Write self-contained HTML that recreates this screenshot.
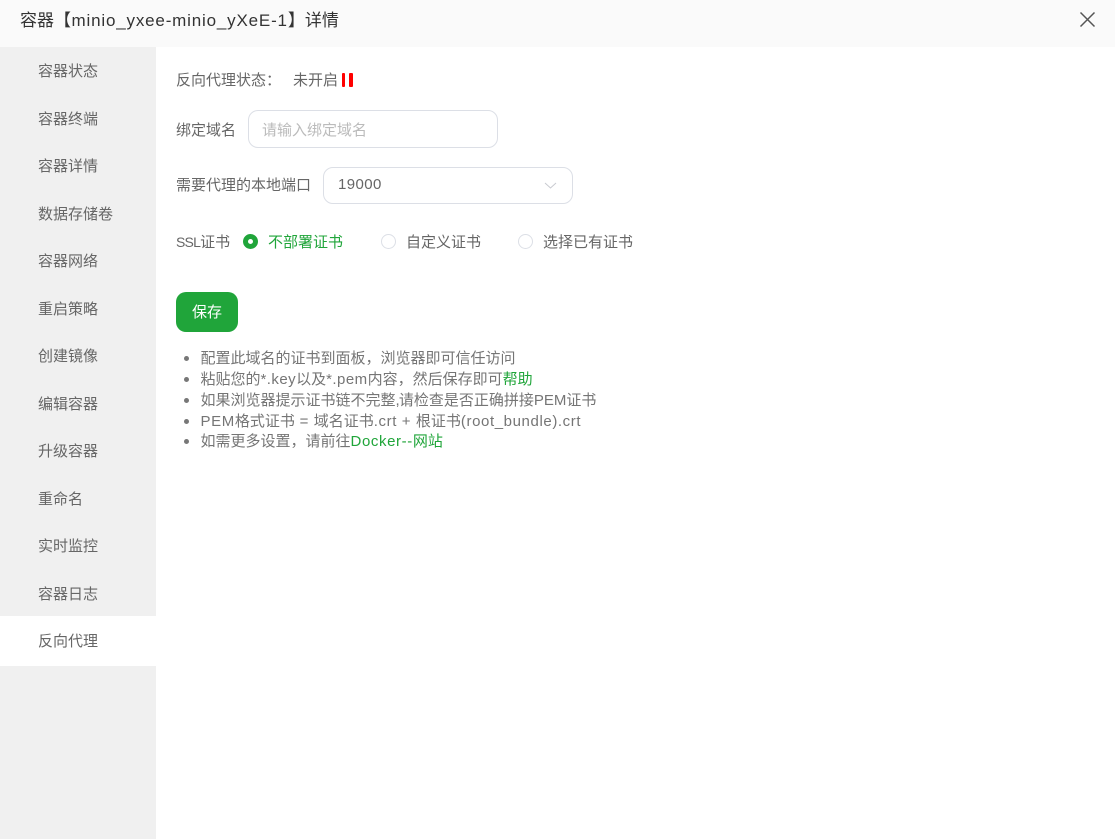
<!DOCTYPE html>
<html lang="zh-CN">
<head>
<meta charset="utf-8">
<title>容器详情</title>
<style>
*{box-sizing:border-box;margin:0;padding:0}
html,body{width:1115px;height:839px;overflow:hidden;background:#fff}
body{position:relative;font-family:"Liberation Sans","Noto Sans CJK SC",sans-serif;font-size:15px;color:#666}
.t{position:absolute;white-space:nowrap;line-height:20px}
.head{position:absolute;left:0;top:0;width:1115px;height:47px;background:#fafafa}
.title{position:absolute;left:20px;top:9px;font-size:17px;line-height:24px;color:#333;white-space:nowrap}
.side{position:absolute;left:0;top:47px;width:156px;height:792px;background:#f0f0f0}
.side div{position:absolute;left:38px;white-space:nowrap;line-height:20px;color:#666}
.active{position:absolute;left:0;top:616px;width:156px;height:50px;background:#fff}
.box{position:absolute;background:#fff;border:1px solid #dcdfe6;border-radius:10px}
.radio{position:absolute;width:15px;height:15px;border-radius:50%;border:1px solid #dcdfe6;background:#fff}
.radio.on{border:5px solid #20a53a}
.btn{position:absolute;left:176px;top:292px;width:62px;height:40px;background:#20a53a;border-radius:10px;color:#fff;text-align:center;line-height:40px;font-size:15px;padding-top:1px}
.dot{position:absolute;left:184px;width:5px;height:5px;border-radius:50%;background:#777}
.g{color:#20a53a}
.l{color:#757575}
.l .g{color:#20a53a}
.w{letter-spacing:.6px}
</style>
</head>
<body>
<div class="head"></div>
<div class="title">容器【<span style="letter-spacing:.82px;margin-left:.5px">minio_yxee-minio_yXeE-1</span>】详情</div>
<svg style="position:absolute;left:1079px;top:11px" width="17" height="17" viewBox="0 0 17 17"><path d="M1.5 1.5L15.5 15.5M15.5 1.5L1.5 15.5" stroke="#555" stroke-width="1.5" fill="none"/></svg>

<div class="side">
<div style="top:15px">容器状态</div>
<div style="top:63px">容器终端</div>
<div style="top:110px">容器详情</div>
<div style="top:158px">数据存储卷</div>
<div style="top:205px">容器网络</div>
<div style="top:253px">重启策略</div>
<div style="top:300px">创建镜像</div>
<div style="top:348px">编辑容器</div>
<div style="top:395px">升级容器</div>
<div style="top:443px">重命名</div>
<div style="top:490px">实时监控</div>
<div style="top:538px">容器日志</div>
</div>
<div class="active"></div>
<div class="t" style="left:38px;top:632px">反向代理</div>

<div class="t" style="left:176px;top:71px">反向代理状态：</div>
<div class="t" style="left:293px;top:71px">未开启</div>
<div style="position:absolute;left:342px;top:72.5px;width:3.2px;height:14px;background:#f00;border-radius:1px"></div>
<div style="position:absolute;left:349.4px;top:72.5px;width:3.2px;height:14px;background:#f00;border-radius:1px"></div>

<div class="t" style="left:176px;top:121px">绑定域名</div>
<div class="box" style="left:248px;top:110px;width:250px;height:38px"></div>
<div class="t" style="left:262px;top:121px;color:#bbb">请输入绑定域名</div>

<div class="t" style="left:176px;top:176px">需要代理的本地端口</div>
<div class="box" style="left:323px;top:167px;width:250px;height:37px"></div>
<div class="t" style="left:338px;top:175px;letter-spacing:.4px">19000</div>
<svg style="position:absolute;left:544px;top:182px" width="13" height="8" viewBox="0 0 13 8"><path d="M1 1L6.5 6L12 1" stroke="#c8cad0" stroke-width="1" fill="none"/></svg>

<div class="t" style="left:176px;top:232px"><span style="font-size:14px;letter-spacing:-.8px">SSL</span>证书</div>
<div class="radio on" style="left:243px;top:234px"></div>
<div class="t g" style="left:268px;top:233px">不部署证书</div>
<div class="radio" style="left:381px;top:234px"></div>
<div class="t" style="left:406px;top:233px">自定义证书</div>
<div class="radio" style="left:518px;top:234px"></div>
<div class="t" style="left:543px;top:233px">选择已有证书</div>

<div class="btn">保存</div>

<div class="dot" style="top:356px"></div>
<div class="t l" style="left:200.5px;top:349px">配置此域名的证书到面板，浏览器即可信任访问</div>
<div class="dot" style="top:377px"></div>
<div class="t l" style="left:200.5px;top:370px">粘贴您的<span style="letter-spacing:.45px">*.key</span>以及<span style="letter-spacing:.45px">*.pem</span>内容，然后保存即可<span class="g">帮助</span></div>
<div class="dot" style="top:398px"></div>
<div class="t l" style="left:200.5px;top:391px">如果浏览器提示证书链不完整<span style="letter-spacing:-.8px">,</span>请检查是否正确拼接PEM证书</div>
<div class="dot" style="top:419px"></div>
<div class="t l" style="left:200.5px;top:412px"><span class="w">PEM</span>格式证书<span class="w"> = </span>域名证书<span class="w">.crt + </span>根证书<span class="w">(root_bundle).crt</span></div>
<div class="dot" style="top:439px"></div>
<div class="t l" style="left:200.5px;top:432px">如需更多设置，请前往<span class="g"><span class="w">Docker--</span>网站</span></div>
</body>
</html>
